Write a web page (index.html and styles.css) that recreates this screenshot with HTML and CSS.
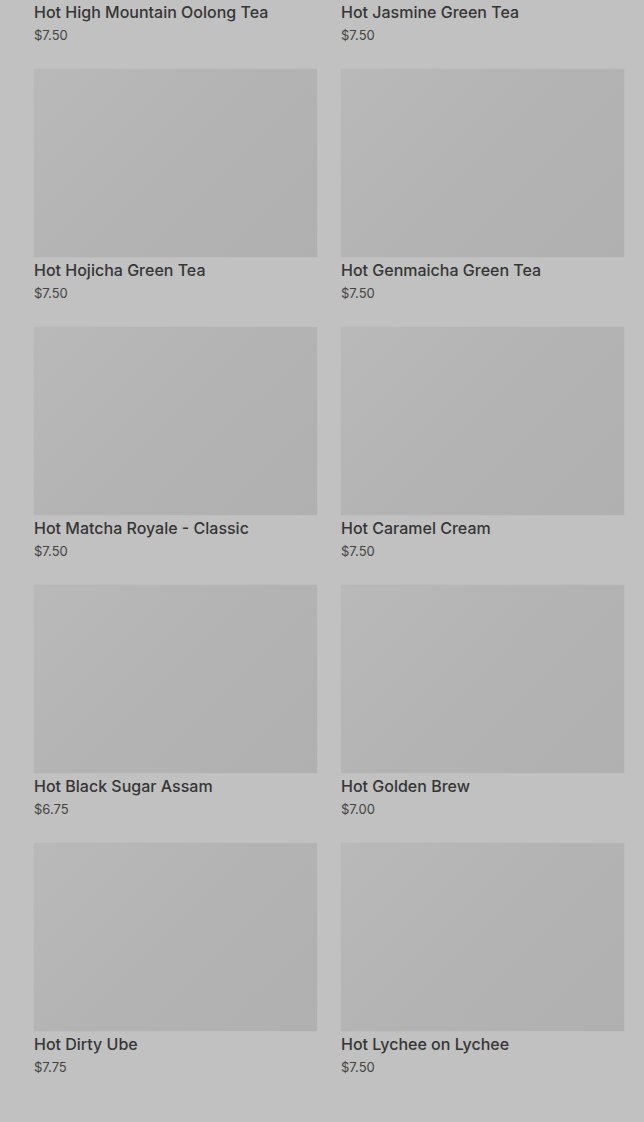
FILE: index.html
```html
<!DOCTYPE html>
<html lang="en">
<head>
<meta charset="utf-8">
<title>Menu</title>
<link rel="stylesheet" href="styles.css">
</head>
<body>
<main class="grid">
  <div class="card"><div class="thumb"></div><div class="name">Hot High Mountain Oolong Tea</div><div class="price">$7.50</div></div>
  <div class="card"><div class="thumb"></div><div class="name">Hot Jasmine Green Tea</div><div class="price">$7.50</div></div>
  <div class="card"><div class="thumb"></div><div class="name">Hot Hojicha Green Tea</div><div class="price">$7.50</div></div>
  <div class="card"><div class="thumb"></div><div class="name">Hot Genmaicha Green Tea</div><div class="price">$7.50</div></div>
  <div class="card"><div class="thumb"></div><div class="name">Hot Matcha Royale - Classic</div><div class="price">$7.50</div></div>
  <div class="card"><div class="thumb"></div><div class="name">Hot Caramel Cream</div><div class="price">$7.50</div></div>
  <div class="card"><div class="thumb"></div><div class="name">Hot Black Sugar Assam</div><div class="price">$6.75</div></div>
  <div class="card"><div class="thumb"></div><div class="name">Hot Golden Brew</div><div class="price">$7.00</div></div>
  <div class="card"><div class="thumb"></div><div class="name">Hot Dirty Ube</div><div class="price">$7.75</div></div>
  <div class="card"><div class="thumb"></div><div class="name">Hot Lychee on Lychee</div><div class="price">$7.50</div></div>
</main>
</body>
</html>
```
FILE: styles.css
```css
html, body {
  margin: 0;
  padding: 0;
  background: #c1c1c1;
  height: 100%;
  overflow: hidden;
}
body {
  font-family: Inter, Roboto, "Liberation Sans", sans-serif;
  color: #363636;
}
.grid {
  display: grid;
  grid-template-columns: 283px 283px;
  column-gap: 24px;
  row-gap: 26px;
  padding: 0 20px 0 34px;
  margin-top: -189px;
}
.card {
  display: flex;
  flex-direction: column;
}
.thumb {
  height: 188px;
  background: linear-gradient(135deg, #b9b9b9 0%, #b3b3b3 50%, #b0b0b0 100%);
  box-shadow: 0 0 2px rgba(0, 0, 0, 0.04);
}
.name {
  margin-top: 3px;
  font-size: 16px;
  line-height: 20px;
  font-weight: 500;
  color: #363636;
}
.price {
  margin-top: 5px;
  font-size: 13px;
  line-height: 16px;
  color: #444;
}
```
